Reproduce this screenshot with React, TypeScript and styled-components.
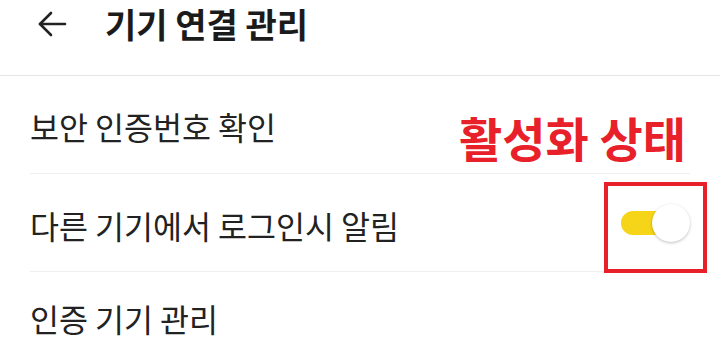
import styled, { createGlobalStyle } from 'styled-components';

const Global = createGlobalStyle`
  html, body { margin: 0; padding: 0; background: #fff; }
  body { font-family: "Noto Sans CJK KR", "Noto Sans", sans-serif; }
`;

const Screen = styled.div`
  position: relative;
  width: 720px;
  height: 341px;
  background: #fff;
`;

// 상단 헤더
const Header = styled.header`
  display: flex;
  align-items: center;
  height: 76px;
  box-sizing: border-box;
  padding: 0 0 27px 37px;
  border-bottom: 1px solid #e6e6e6;
`;

const BackButton = styled.button`
  display: flex;
  align-items: center;
  justify-content: center;
  width: 30px;
  height: 30px;
  padding: 0;
  border: 0;
  background: none;
  color: #222;
`;

const Title = styled.h1`
  margin: 0 0 0 38px;
  font-size: 34px;
  font-weight: 700;
  color: #1b1b1b;
  line-height: 1.25;
`;

const List = styled.ul`
  list-style: none;
  margin: 0;
  padding: 0 30px;
`;

// 마지막 행은 화면 하단에서 잘리므로 높이를 줄이고 위쪽 여백으로 맞춤
const Row = styled.li<{ $last?: boolean }>`
  display: flex;
  align-items: ${p => (p.$last ? 'flex-start' : 'center')};
  justify-content: space-between;
  box-sizing: border-box;
  height: ${p => (p.$last ? '68px' : '98px')};
  padding-top: ${p => (p.$last ? '28px' : '0')};
  border-bottom: ${p => (p.$last ? 'none' : '1px solid #f0f0f0')};
`;

const Label = styled.span<{ $dy?: number }>`
  font-size: 31.5px;
  color: #222;
  line-height: 1.2;
  transform: translateY(${p => p.$dy ?? 0}px);
`;

// 토글 스위치 (활성화)
const Switch = styled.div`
  position: relative;
  width: 69px;
  height: 38px;
  display: flex;
  align-items: center;
`;

const Track = styled.div<{ $on: boolean }>`
  width: 58px;
  height: 24px;
  border-radius: 12px;
  background: ${p => (p.$on ? '#f6d417' : '#ccc')};
`;

const Knob = styled.div<{ $on: boolean }>`
  position: absolute;
  top: 0;
  left: ${p => (p.$on ? '31px' : '0')};
  width: 38px;
  height: 38px;
  border-radius: 50%;
  background: #fff;
  box-shadow: 0 1px 3px rgba(0, 0, 0, 0.25);
`;

// 주석 (빨간 강조)
const Note = styled.div`
  position: absolute;
  left: 459px;
  top: 109px;
  font-size: 47px;
  font-weight: 700;
  color: #e8202a;
  line-height: 1.2;
`;

const Highlight = styled.div`
  position: absolute;
  left: 604px;
  top: 182px;
  width: 103px;
  height: 91px;
  box-sizing: border-box;
  border: 4px solid #e8202a;
`;

export default function App() {
  return (
    <Screen>
      <Global />
      <Header>
        <BackButton aria-label="뒤로">
          <svg width="30" height="30" viewBox="0 0 30 30" fill="none" stroke="currentColor" strokeWidth="2.6" strokeLinecap="round" strokeLinejoin="round">
            <path d="M28 15H3" />
            <path d="M14 4L3 15l11 11" />
          </svg>
        </BackButton>
        <Title>기기 연결 관리</Title>
      </Header>
      <List>
        <Row>
          <Label $dy={2}>보안 인증번호 확인</Label>
        </Row>
        <Row>
          <Label $dy={3}>다른 기기에서 로그인시 알림</Label>
          <Switch>
            <Track $on />
            <Knob $on />
          </Switch>
        </Row>
        <Row $last>
          <Label>인증 기기 관리</Label>
        </Row>
      </List>
      <Note>활성화 상태</Note>
      <Highlight />
    </Screen>
  );
}
